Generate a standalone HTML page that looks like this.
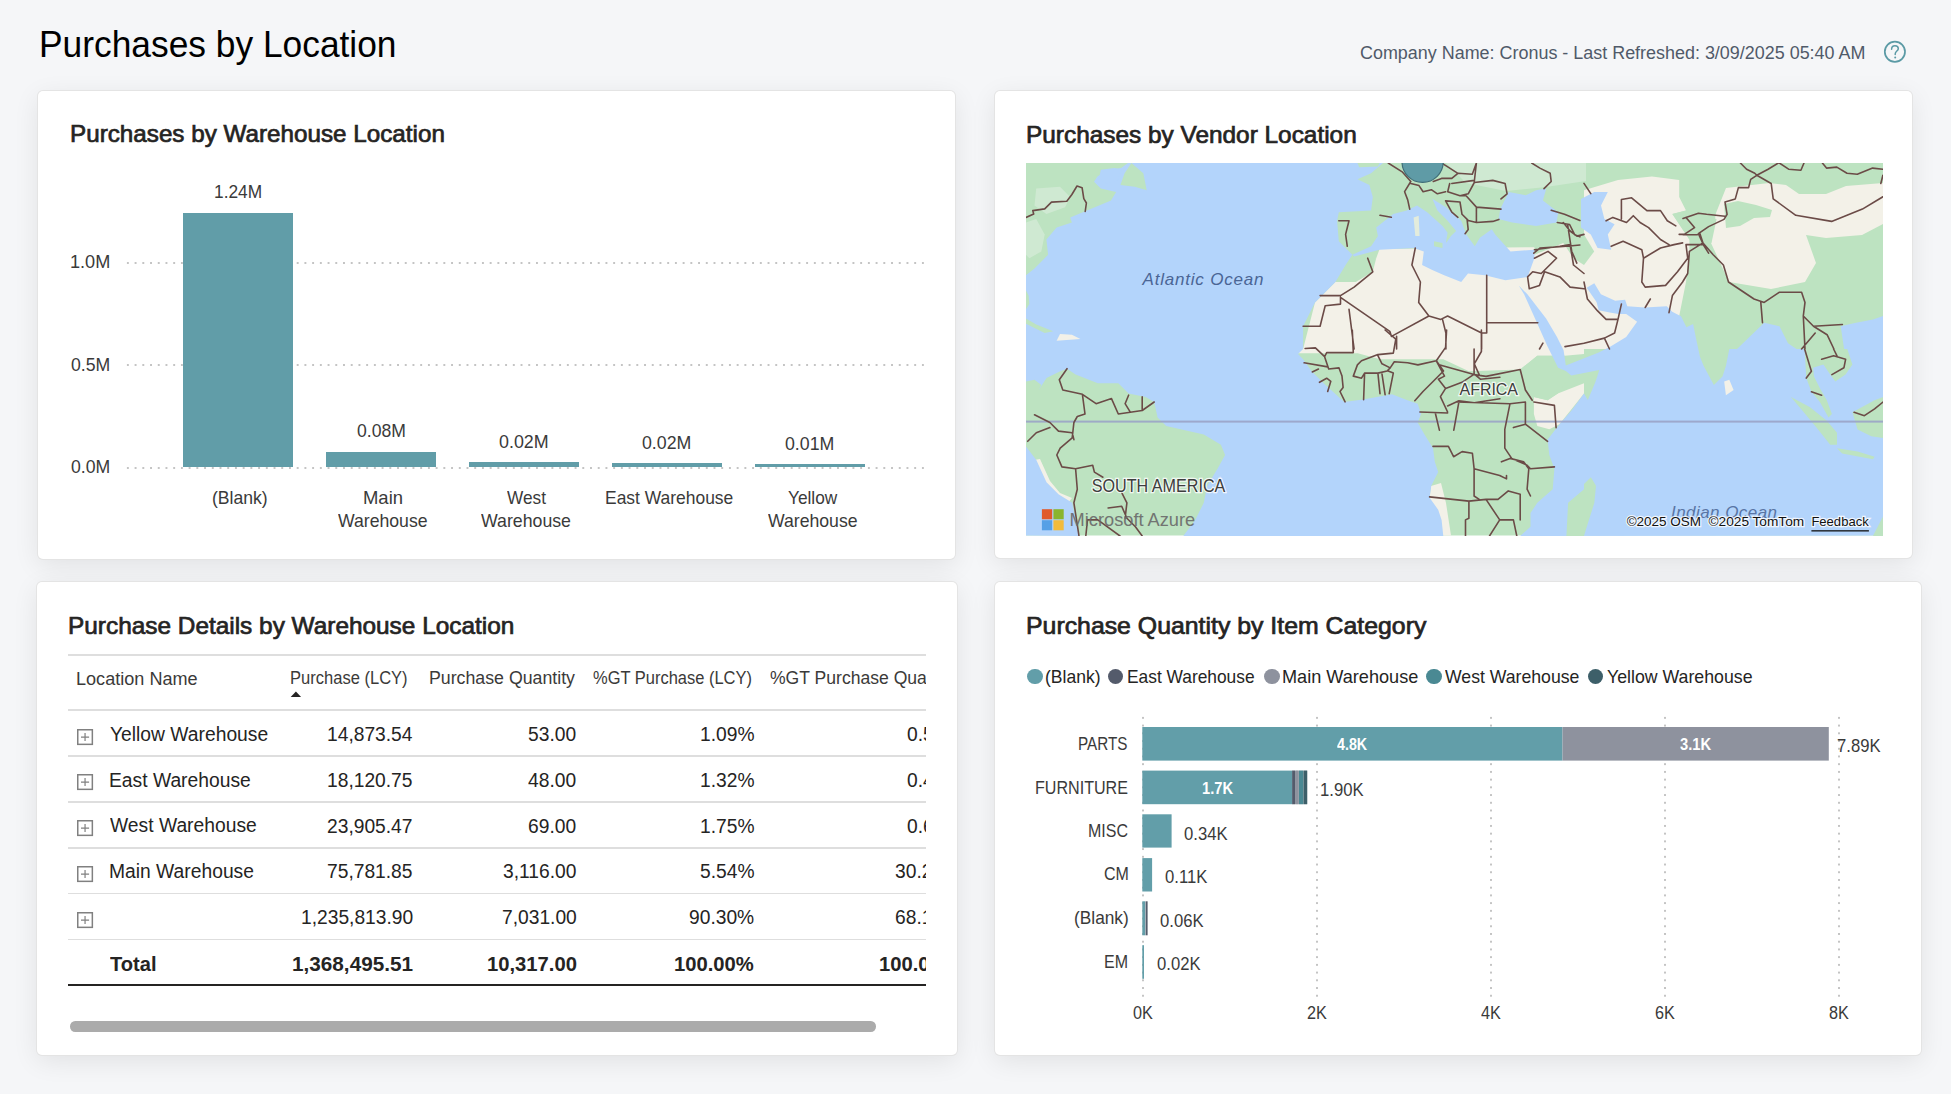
<!DOCTYPE html>
<html><head><meta charset="utf-8"><style>
html,body{margin:0;padding:0;}
body{width:1951px;height:1094px;background:#f5f6f8;position:relative;overflow:hidden;font-family:"Liberation Sans",sans-serif;}
.t{position:absolute;white-space:nowrap;}
.r{position:absolute;}
.clip{position:absolute;overflow:hidden;}
.card{position:absolute;background:#fff;border-radius:5px;box-shadow:0 0 0 1px #e4e4e4, 0 6px 26px rgba(0,0,0,0.085);}
</style></head><body>
<div class="t" style="left:38.99px;top:26.31px;font-size:37.79px;line-height:37.79px;color:#000000;transform:scaleX(0.9353);transform-origin:0 0;">Purchases by Location</div>
<div class="t" style="left:1360.15px;top:44.21px;font-size:18.90px;line-height:18.90px;color:#505a69;transform:scaleX(0.9494);transform-origin:0 0;">Company Name: Cronus - Last Refreshed: 3/09/2025 05:40 AM</div>
<svg class="r" style="left:1880px;top:37px;width:30px;height:30px" viewBox="0 0 30 30"><circle cx="14.9" cy="14.8" r="10.1" fill="none" stroke="#5b9aa5" stroke-width="1.7"/><path d="M11.6 12.2 C11.6 9.9 13.2 8.7 15 8.7 C16.9 8.7 18.3 9.9 18.3 11.7 C18.3 13.9 15.2 14.3 15.2 16.9 L15.2 17.6" fill="none" stroke="#5b9aa5" stroke-width="1.5" stroke-linecap="round"/><circle cx="15.2" cy="20.6" r="1" fill="#5b9aa5"/></svg>
<div class="card" style="left:37.50px;top:90.50px;width:917.00px;height:468.50px"></div>
<div class="card" style="left:995.00px;top:91.00px;width:916.50px;height:467.00px"></div>
<div class="card" style="left:36.50px;top:581.50px;width:920.00px;height:473.50px"></div>
<div class="card" style="left:994.50px;top:581.50px;width:926.00px;height:473.50px"></div>
<div class="t" style="left:69.78px;top:122.12px;font-size:23.84px;line-height:23.84px;color:#252423;-webkit-text-stroke:0.7px #252423;transform:scaleX(1.0169);transform-origin:0 0;">Purchases by Warehouse Location</div>
<div class="t" style="left:70.03px;top:252.65px;font-size:18.60px;line-height:18.60px;color:#3a3a3a;transform:scaleX(0.9744);transform-origin:0 0;">1.0M</div>
<div class="r" style="left:124px;top:261.6px;width:800px;height:2px;background-image:radial-gradient(circle,#c4c4c4 0.8px,transparent 1.05px);background-size:7.72px 2px;"></div>
<div class="t" style="left:71.00px;top:355.55px;font-size:18.60px;line-height:18.60px;color:#3a3a3a;transform:scaleX(0.9500);transform-origin:0 0;">0.5M</div>
<div class="r" style="left:124px;top:364.2px;width:800px;height:2px;background-image:radial-gradient(circle,#c4c4c4 0.8px,transparent 1.05px);background-size:7.72px 2px;"></div>
<div class="t" style="left:71.00px;top:458.45px;font-size:18.60px;line-height:18.60px;color:#3a3a3a;transform:scaleX(0.9500);transform-origin:0 0;">0.0M</div>
<div class="r" style="left:124px;top:466.8px;width:800px;height:2px;background-image:radial-gradient(circle,#c4c4c4 0.8px,transparent 1.05px);background-size:7.72px 2px;"></div>
<div class="r" style="left:182.90px;top:213.40px;width:110.20px;height:253.90px;background:#619da8;"></div>
<div class="r" style="left:325.90px;top:451.50px;width:110.20px;height:15.80px;background:#619da8;"></div>
<div class="r" style="left:468.90px;top:462.00px;width:110.20px;height:5.30px;background:#619da8;"></div>
<div class="r" style="left:612.00px;top:463.10px;width:110.20px;height:4.20px;background:#619da8;"></div>
<div class="r" style="left:755.00px;top:463.80px;width:110.20px;height:3.50px;background:#619da8;"></div>
<div class="t" style="left:213.83px;top:184.47px;font-size:17.88px;line-height:17.88px;color:#3a3a3a;transform:scaleX(0.9708);transform-origin:0 0;">1.24M</div>
<div class="t" style="left:356.60px;top:423.37px;font-size:17.88px;line-height:17.88px;color:#3a3a3a;transform:scaleX(0.9857);transform-origin:0 0;">0.08M</div>
<div class="t" style="left:499.00px;top:434.17px;font-size:17.88px;line-height:17.88px;color:#3a3a3a;">0.02M</div>
<div class="t" style="left:642.30px;top:434.97px;font-size:17.88px;line-height:17.88px;color:#3a3a3a;transform:scaleX(0.9939);transform-origin:0 0;">0.02M</div>
<div class="t" style="left:785.30px;top:436.07px;font-size:17.88px;line-height:17.88px;color:#3a3a3a;transform:scaleX(0.9939);transform-origin:0 0;">0.01M</div>
<div class="t" style="left:212.10px;top:489.35px;font-size:18.60px;line-height:18.60px;color:#3a3a3a;transform:scaleX(0.9456);transform-origin:0 0;">(Blank)</div>
<div class="t" style="left:362.71px;top:488.55px;font-size:18.60px;line-height:18.60px;color:#3a3a3a;transform:scaleX(0.9923);transform-origin:0 0;">Main</div>
<div class="t" style="left:338.45px;top:512.35px;font-size:18.60px;line-height:18.60px;color:#3a3a3a;transform:scaleX(0.9489);transform-origin:0 0;">Warehouse</div>
<div class="t" style="left:506.65px;top:488.55px;font-size:18.60px;line-height:18.60px;color:#3a3a3a;transform:scaleX(0.9262);transform-origin:0 0;">West</div>
<div class="t" style="left:481.30px;top:512.35px;font-size:18.60px;line-height:18.60px;color:#3a3a3a;transform:scaleX(0.9532);transform-origin:0 0;">Warehouse</div>
<div class="t" style="left:604.91px;top:488.55px;font-size:18.60px;line-height:18.60px;color:#3a3a3a;transform:scaleX(0.9378);transform-origin:0 0;">East Warehouse</div>
<div class="t" style="left:787.60px;top:488.55px;font-size:18.60px;line-height:18.60px;color:#3a3a3a;transform:scaleX(0.9283);transform-origin:0 0;">Yellow</div>
<div class="t" style="left:767.60px;top:511.95px;font-size:18.60px;line-height:18.60px;color:#3a3a3a;transform:scaleX(0.9489);transform-origin:0 0;">Warehouse</div>
<div class="t" style="left:1025.88px;top:122.62px;font-size:23.84px;line-height:23.84px;color:#252423;-webkit-text-stroke:0.7px #252423;transform:scaleX(1.0233);transform-origin:0 0;">Purchases by Vendor Location</div>
<svg class="r" style="left:1026px;top:163px;width:857px;height:372.5px" viewBox="0 0 857 372.5" preserveAspectRatio="none"><rect x="0" y="0" width="857" height="372.5" fill="#bde3c1"/><path d="M277.1 186.0 L289.0 139.4 L309.4 119.0 L350.2 95.2 L353.6 85.9 L508.4 84.2 L508.4 91.8 L537.3 79.9 L558.0 81.6 L558.0 186.0 Z" fill="#f3f1e8"/><path d="M272.0 186.0 L558.0 186.0 L558.0 191.1 L538.7 192.8 L511.3 192.8 L494.2 206.5 L442.9 208.2 L417.3 196.3 L354.1 196.3 L331.8 190.3 L272.0 190.3 Z" fill="#f3f1e8"/><path d="M507.9 233.9 L521.6 237.3 L531.8 230.4 L558.0 220.2 L558.0 230.4 L533.5 261.2 L523.3 266.3 L511.3 262.9 L507.9 251.0 Z" fill="#f3f1e8"/><path d="M558.0 27.2 L592.0 17.0 L626.0 13.6 L653.2 17.0 L653.2 34.0 L660.0 47.6 L646.4 51.0 L663.4 76.5 L663.4 88.4 L660.0 119.0 L653.2 153.0 L660.0 186.0 L558.0 186.0 Z" fill="#f3f1e8"/><path d="M700.0 25.0 L743.0 20.0 L760.0 22.0 L773.0 31.0 L800.0 31.0 L820.0 23.0 L857.0 20.0 L857.0 61.0 L836.0 72.0 L800.0 75.0 L780.0 72.0 L790.0 100.0 L779.0 119.0 L745.0 126.0 L703.0 119.0 L685.0 80.0 L690.0 50.0 Z" fill="#f3f1e8"/><path d="M309.4 119.0 L319.6 102.0 L328.1 93.5 L350.2 95.2 L346.8 108.8 L329.8 119.0 Z" fill="#bde3c1"/><path d="M537.3 79.9 L544.1 59.5 L558.0 56.1 L558.0 102.0 L547.5 95.2 Z" fill="#bde3c1"/><path d="M558.0 71.4 L568.2 88.4 L558.0 102.0 Z" fill="#bde3c1"/><path d="M646.4 51.0 L660.0 47.6 L690.6 56.1 L685.5 79.9 L677.0 81.6 L663.4 76.5 Z" fill="#bde3c1"/><path d="M698.0 41.0 L712.0 38.0 L730.0 42.0 L746.0 47.0 L744.0 54.0 L728.0 55.0 L714.0 63.0 L700.0 65.0 Z" fill="#bde3c1"/><path d="M420.0 0.0 L560.0 0.0 L560.0 18.0 L520.0 24.0 L480.0 28.0 L440.0 20.0 Z" fill="#cfe9d2"/><path d="M494.2 206.5 L511.3 192.8 L538.7 192.8 L545.5 211.6 L531.8 230.4 L521.6 237.3 L507.9 233.9 L499.4 220.2 Z" fill="#bde3c1"/><path d="M405.0 323.0 L415.0 320.0 L420.0 340.0 L425.0 372.5 L412.0 372.5 L402.0 345.0 Z" fill="#f3f1e8"/><path d="M8.0 297.0 L14.0 296.0 L24.0 318.0 L34.0 330.0 L46.0 335.0 L42.0 340.0 L28.0 333.0 L14.0 315.0 Z" fill="#f3f1e8"/><path d="M102.0 0.0 L357.0 0.0 L345.1 10.2 L331.5 16.2 L343.4 22.1 L346.8 34.0 L345.1 47.6 L312.8 49.3 L311.1 57.8 L312.8 78.2 L319.6 85.0 L326.4 91.8 L319.6 102.0 L309.4 119.0 L289.0 139.4 L277.1 163.2 L277.1 186.0 L272.0 191.1 L277.1 196.3 L285.7 208.2 L297.6 220.2 L318.2 239.0 L337.0 236.4 L366.0 231.3 L381.4 237.3 L391.7 240.7 L395.1 251.0 L391.7 259.5 L398.5 271.5 L407.0 285.1 L408.8 298.8 L412.2 309.1 L405.3 322.8 L403.6 334.7 L412.2 346.7 L415.6 356.9 L417.3 373.0 L157.3 373.0 L169.2 356.9 L177.8 339.8 L181.2 322.8 L191.5 305.7 L199.1 292.0 L194.9 281.7 L177.8 271.5 L140.2 262.9 L131.6 254.4 L128.2 239.0 L119.7 233.9 L102.6 230.4 L92.3 220.2 L71.8 220.2 L49.6 211.6 L41.0 205.7 L34.2 208.2 L20.5 215.1 L12.8 227.0 L15.4 221.9 L8.5 216.8 L0.0 218.5 L0.0 218.5 L0.0 146.2 L0.0 146.2 L3.4 141.1 L2.6 132.6 L0.0 127.5 L0.0 112.2 L0.0 112.2 L8.5 105.4 L22.1 91.8 L20.4 76.5 L30.6 64.6 L45.9 59.5 L44.2 54.4 L64.6 45.9 L85.0 37.4 L90.1 28.9 L74.8 25.5 L68.0 18.7 L71.4 13.6 L81.6 6.8 L95.2 5.1 L102.0 0.0 Z" fill="#b3d4fb"/><path d="M0.0 283.4 L10.3 297.1 L20.5 319.3 L32.5 331.3 L46.2 339.8 L49.6 356.9 L53.0 373.0 L0.0 372.5 Z" fill="#b3d4fb"/><path d="M494.2 373.0 L504.5 363.8 L504.5 350.1 L511.3 339.8 L526.7 326.2 L528.4 305.7 L523.3 292.0 L521.6 276.6 L533.5 261.2 L545.5 247.5 L558.0 230.4 L561.8 237.0 L569.4 219.0 L573.3 207.0 L545.3 212.4 L539.8 208.1 L532.1 204.8 L521.2 182.8 L512.4 163.1 L498.1 131.3 L492.7 122.5 L501.4 131.3 L520.1 155.4 L531.0 174.0 L537.6 187.2 L539.8 202.6 L572.7 189.4 L583.7 183.9 L600.2 174.0 L611.1 158.7 L600.2 151.0 L592.5 151.0 L583.7 149.4 L572.7 147.2 L570.5 138.9 L560.7 124.7 L568.3 120.3 L574.9 131.3 L589.2 137.8 L599.1 136.7 L601.3 143.3 L618.8 144.4 L640.8 143.3 L646.2 148.8 L655.0 153.2 L660.5 164.2 L667.1 160.9 L670.4 177.3 L674.0 193.8 L670.8 186.0 L677.7 203.1 L687.9 221.9 L696.5 213.4 L699.9 203.1 L703.3 186.0 L711.0 186.0 L738.2 159.8 L753.5 163.2 L762.0 180.2 L770.5 186.0 L778.6 186.0 L780.3 215.1 L785.4 228.7 L793.9 239.0 L802.5 254.4 L805.9 251.0 L800.8 237.3 L793.9 225.3 L788.0 213.4 L787.1 204.8 L797.4 201.4 L804.2 211.6 L809.3 218.5 L819.6 211.6 L826.4 201.4 L821.3 186.0 L818.1 186.0 L814.7 163.2 L830.0 159.8 L847.0 156.4 L857.0 153.0 L857.0 150.0 L857.0 372.5 Z" fill="#b3d4fb"/><path d="M326.4 91.8 L345.1 83.3 L351.9 73.1 L350.2 64.6 L367.2 51.0 L380.8 47.6 L391.0 42.5 L401.2 49.3 L416.5 62.9 L421.6 69.7 L419.9 79.9 L425.0 73.1 L430.1 68.0 L421.6 57.8 L411.4 47.6 L406.3 35.7 L419.9 44.2 L435.2 57.8 L440.3 71.4 L448.8 83.3 L453.9 74.8 L465.8 66.3 L469.2 71.4 L484.5 88.4 L508.4 86.7 L508.4 95.2 L501.6 113.9 L479.4 117.3 L459.0 112.2 L442.0 110.5 L435.2 119.0 L418.2 112.2 L406.3 107.1 L396.1 102.0 L397.8 88.4 L387.6 85.0 L353.6 86.7 L328.1 93.5 Z" fill="#b3d4fb"/><path d="M474.3 45.9 L482.8 28.9 L499.9 32.3 L510.1 27.2 L520.3 25.5 L516.9 37.4 L532.2 49.3 L530.5 59.5 L510.1 62.9 L486.2 59.5 L472.6 56.1 Z" fill="#b3d4fb"/><path d="M555.0 36.0 L568.2 28.9 L581.8 28.9 L575.0 42.5 L578.4 56.1 L588.6 61.2 L581.8 71.4 L585.2 86.7 L571.6 85.0 L564.8 71.4 L555.0 64.6 Z" fill="#b3d4fb"/><path d="M74.8 6.8 L88.4 5.1 L95.2 6.8 L91.8 17.0 L79.9 20.4 L73.1 15.3 Z" fill="#b3d4fb"/><path d="M94.4 22.1 L98.6 10.2 L105.4 0.0 L117.3 10.2 L120.7 27.2 L108.8 23.8 Z" fill="#bde3c1"/><path d="M0.0 155.6 L10.2 161.5 L27.2 168.3 L18.7 170.0 L8.5 164.9 L0.0 160.7 Z" fill="#bde3c1"/><path d="M558.0 321.1 L564.8 314.2 L570.0 322.8 L568.3 339.9 L559.7 367.2 L558.0 373.0 Z" fill="#bde3c1"/><path d="M764.9 233.9 L783.7 244.1 L800.8 257.8 L811.0 269.8 L811.0 281.7 L804.2 281.7 L790.5 264.6 L773.4 244.1 Z" fill="#bde3c1"/><path d="M826.4 249.3 L848.6 237.3 L857.0 233.9 L857.0 274.9 L845.2 273.2 L831.6 266.4 Z" fill="#bde3c1"/><path d="M811.0 285.2 L831.6 288.6 L848.6 293.7 L846.9 296.3 L816.2 290.6 Z" fill="#bde3c1"/><path d="M846.9 373.0 L857.0 353.6 L857.0 373.0 Z" fill="#bde3c1"/><path d="M408.0 78.2 L416.5 79.9 L416.5 85.0 L408.0 83.3 Z" fill="#bde3c1"/><path d="M542.1 339.8 L558.0 326.2 L558.0 373.0 L540.4 373.0 Z" fill="#bde3c1"/><path d="M698.2 218.5 L703.3 216.8 L707.6 227.0 L699.9 232.2 Z" fill="#f3f1e8"/><path d="M387.6 54.4 L392.7 52.7 L393.6 73.1 L389.3 73.1 Z" fill="#e3ecdc"/><path d="M10.2 25.5 L34.0 23.8 L44.2 34.0 L39.1 44.2 L20.4 51.0 L8.5 42.5 Z" fill="#cfe9d2"/><path d="M0.0 59.5 L10.2 56.1 L18.7 71.4 L15.3 88.4 L3.4 95.2 L0.0 91.8 Z" fill="#cfe9d2"/><path d="M34.0 170.9 L45.9 171.7 L54.4 176.0 L30.6 177.7 Z" fill="#f3f1e8"/><path d="M331.5 0.0 L353.6 0.0 L351.9 3.4 L333.2 4.3 Z" fill="#bde3c1"/><rect x="0" y="257.6" width="857" height="2" fill="#9aa3c6" opacity="0.9"/><path d="M0.0 54.4 L7.7 51.0 L6.8 47.6 L18.7 45.9 L25.5 39.1 L40.8 38.3 L45.9 31.5 L51.0 23.0 L56.1 24.7 L57.8 35.7 L60.4 40.0 L59.2 48.5 M41.0 205.7 L33.3 216.8 L36.8 227.0 L56.4 231.3 L59.0 251.0 L51.3 253.5 L47.9 259.5 L46.2 274.9 L34.2 285.1 L30.8 292.0 L35.9 303.9 L49.6 305.7 L66.7 302.2 L68.4 309.1 L76.9 314.2 M8.5 251.8 L23.9 259.5 L32.5 268.1 L46.2 269.8 L47.9 276.6 M1.7 278.3 L10.3 269.8 L23.9 264.6 M56.4 231.3 L70.1 240.7 L85.5 235.6 L92.3 251.0 L104.3 249.2 L116.2 247.5 L128.2 239.0 M102.6 232.2 L99.1 240.7 L104.3 249.2 M116.2 233.9 L116.2 247.5 M49.6 305.7 L51.3 326.2 L47.9 339.8 L53.0 373.0 M82.1 345.0 L95.7 343.3 L100.9 355.2 L109.4 363.8 L116.2 373.0 M95.7 329.6 L100.9 339.8 L99.1 355.2 M59.8 373.0 L61.5 356.9 L71.8 356.9 L94.0 373.0 M312.8 57.8 L323.0 57.8 L319.6 71.4 L321.3 83.3 M537.3 59.5 L544.1 68.0 L550.9 73.1 L558.0 71.4 M508.4 86.7 L533.9 83.3 L544.1 81.6 L547.5 102.0 L558.0 110.5 M508.4 95.2 L522.0 88.4 L530.5 95.2 L515.2 110.5 L506.7 108.8 L501.6 113.9 L503.3 125.8 L513.5 122.4 L518.6 108.8 L533.9 113.9 L544.1 124.1 L558.0 125.8 M314.5 132.6 L294.1 132.6 M314.5 132.6 L328.1 124.1 L346.8 108.8 L341.7 95.2 M314.5 134.3 L314.5 141.1 L299.2 142.8 L294.1 163.2 L277.1 163.2 M314.5 134.3 L363.8 168.3 L365.5 173.4 L402.9 153.0 L414.8 156.4 L421.6 153.0 L455.6 170.0 M323.0 146.2 L328.1 186.0 M389.3 85.0 L385.9 102.0 L394.4 119.0 L392.7 139.4 L402.9 153.0 M416.5 156.4 L419.9 170.0 L419.9 186.0 M370.6 173.4 L370.6 186.0 M460.7 112.2 L460.7 170.0 L455.6 170.0 L455.6 186.0 M460.7 159.8 L511.8 159.8 M516.9 180.2 L513.5 186.0 M539.0 183.6 L558.0 180.2 M412.2 201.4 L448.1 211.6 L460.0 213.4 L494.2 206.5 L499.4 227.0 L506.2 237.3 M431.0 239.0 L484.0 240.7 L478.8 266.3 L478.8 285.1 L485.7 295.4 L501.1 302.2 L504.5 305.7 L528.4 303.9 M448.1 211.6 L448.1 186.0 M484.0 240.7 L499.4 239.0 L499.4 261.2 L521.6 278.3 M499.4 261.2 L487.4 264.6 M507.9 239.0 L528.4 242.4 L530.1 264.6 M407.0 283.4 L422.4 283.4 L427.6 293.7 L436.1 288.6 L446.4 290.3 L448.1 305.7 L473.7 312.5 L480.5 315.9 L480.5 312.5 M448.1 305.7 L448.1 333.0 L453.2 336.4 M475.4 298.8 L484.0 295.4 L497.6 298.8 L502.8 305.7 L501.1 326.2 L504.5 333.0 M403.6 333.9 L442.9 338.1 L460.0 336.4 L472.0 336.4 L482.3 327.9 L494.2 331.3 L494.2 356.9 M442.9 338.1 L442.9 355.2 L439.5 356.9 L439.5 373.0 M460.0 336.4 L473.7 356.9 L487.4 356.9 L490.8 373.0 M473.7 356.9 L463.5 373.0 M558.0 20.4 L564.8 30.6 M595.4 56.1 L595.4 36.5 L605.6 34.8 L620.9 47.6 L634.5 47.6 L641.3 57.8 L649.8 62.9 M580.1 57.8 L586.9 54.4 L600.5 59.5 L607.3 52.7 L614.1 59.5 L622.6 64.6 L634.5 76.5 L643.0 81.6 M585.2 83.3 L597.1 78.2 L615.8 86.7 L617.5 95.2 L615.8 119.0 L619.2 124.1 L639.6 122.4 L651.5 108.8 L661.7 95.2 L660.0 81.6 L677.0 81.6 M617.5 95.2 L634.5 85.0 L648.1 81.6 L656.6 79.9 M660.0 54.4 L668.5 64.6 L658.3 71.4 L653.2 71.4 M673.6 69.7 L677.0 79.9 L687.2 91.8 L697.4 102.0 L702.5 119.0 L728.0 136.0 L738.2 139.4 L753.5 129.2 L775.6 129.2 L779.0 139.4 L777.3 153.0 L787.5 163.2 L816.4 161.5 M677.0 79.9 L663.4 88.4 L661.7 110.5 L656.6 119.0 L646.4 132.6 L643.0 149.6 M734.8 139.4 L736.5 159.8 M777.3 153.0 L779.0 186.0 M787.5 163.2 L801.1 171.7 L807.9 186.0 M775.6 186.0 L789.2 170.0 M558.0 119.0 L561.4 136.0 L571.6 147.9 L580.1 156.4 L592.0 156.4 L595.4 141.1 M592.0 156.4 L588.6 170.0 L578.4 175.1 L558.0 180.2 M578.4 175.1 L583.5 186.0 M624.3 136.0 L619.2 144.5 M778.6 186.0 L785.4 208.2 L780.3 215.1 M795.6 196.3 L807.6 192.8 L819.6 196.3 L817.9 204.8 L805.9 211.6 M807.6 186.0 L811.0 192.8 M785.4 228.7 L795.6 232.2 M828.1 249.3 L838.4 252.7 L848.6 245.8 L857.0 239.0 M279.1 185.5 L289.4 184.9 L298.6 193.7 L302.7 206.0 L313.0 204.9 L316.0 213.1 L317.1 224.4 L314.0 228.5 L319.1 238.8 M298.6 193.7 L300.7 189.6 L327.3 189.6 L326.3 167.0 M327.3 213.1 L331.4 201.9 L335.5 197.8 L351.9 191.6 L367.3 190.1 L369.8 176.2 L366.3 173.2 L359.1 167.0 M351.9 192.6 L356.0 200.8 L364.2 204.9 L368.3 198.8 L381.6 199.8 L391.9 201.9 L410.3 197.8 L419.6 184.4 L420.6 167.0 M327.3 213.1 L335.5 215.2 L338.6 210.1 L351.9 210.1 L361.1 208.0 L364.2 204.9 M338.6 210.1 L337.6 236.7 M351.9 210.1 L354.0 230.6 M356.0 211.1 L359.1 231.6 M362.2 208.0 L367.3 210.1 L363.2 230.6 M410.3 197.8 L417.5 208.0 L407.3 218.3 L397.0 228.5 L388.8 237.7 M410.3 197.8 L418.5 213.1 L412.4 216.2 L419.6 225.4 L414.4 233.6 L421.6 249.0 M419.6 225.4 L436.0 219.3 L448.3 211.1 L454.4 216.2 L473.9 214.2 M421.6 242.9 L432.9 237.7 L448.3 239.8 L473.9 235.7 M393.9 249.0 L421.6 250.0 M409.3 250.0 L413.4 267.1 M432.9 238.8 L427.8 267.1 M455.4 167.0 L455.4 188.5 L448.3 200.8 L453.4 212.1 M278.1 199.8 L301.7 203.9 M286.3 209.0 L292.5 206.0 M293.5 219.3 L300.7 215.2 L304.8 218.3 L301.7 228.5 M362.2 0.0 L376.6 9.2 L384.8 18.5 L378.6 28.7 L381.7 36.9 L383.7 46.1 M384.8 20.5 L393.0 22.6 L397.1 28.7 L405.3 26.7 L411.4 30.8 L419.6 28.7 M415.5 0.0 L420.6 3.1 L431.9 10.3 L446.3 11.3 L450.4 0.0 M407.3 18.5 L415.5 15.4 L425.8 15.4 L431.9 10.3 M425.8 20.5 L448.3 17.4 M423.7 20.5 L421.7 28.7 L434.0 32.8 L442.2 30.8 L448.3 19.5 L466.8 17.4 L479.1 20.5 L481.1 30.8 L475.0 35.9 M434.0 32.8 L440.1 32.8 L450.4 44.1 L475.0 46.1 M450.4 44.1 L450.4 59.5 M419.6 37.9 L434.0 39.0 L436.0 51.3 L442.2 57.4 L450.4 59.5 L466.8 58.4 L472.9 56.4 M441.1 56.4 L442.2 66.6 L439.1 70.7 M419.6 37.9 L425.8 49.2 L431.9 54.3 M505.7 0.0 L513.9 5.1 L524.2 10.3 L525.2 18.5 L518.0 25.6 M450.4 0.0 L448.3 18.5 M525.2 47.2 L538.5 51.3 L553.9 57.4 M507.8 90.2 L513.9 85.1 L543.6 83.0 L553.9 82.0 M531.3 59.5 L543.6 61.5 L548.8 71.8 L553.9 73.8 M541.6 61.5 L545.7 88.2 L550.8 100.1 M354.0 52.3 L365.3 54.3 M714.4 0.0 L720.6 6.2 L728.8 10.3 L730.8 12.3 L745.2 20.5 L747.2 35.9 L769.8 52.3 L805.6 58.4 L836.4 46.1 L856.9 33.8 M730.8 12.3 L724.7 16.4 L722.6 24.6 L712.4 24.6 L709.3 35.9 L699.0 39.0 L701.1 51.3 L698.0 56.4 L682.6 63.6 L672.4 70.7 L677.5 82.0 L682.6 90.2 M752.3 0.0 L742.1 6.2 L730.8 12.3 M753.4 0.0 L762.6 6.2 L774.9 7.2 L778.0 0.0 M796.4 0.0 L800.5 5.1 L810.8 4.1 L821.0 10.3 L831.3 11.3 L846.6 5.1 L856.9 6.2 M657.0 55.4 L672.4 50.2 L680.6 51.3 L699.0 53.3 M657.0 71.8 L671.4 71.8 M856.9 12.3 L854.8 20.5" fill="none" stroke="#6b4b47" stroke-width="1.6" stroke-linejoin="round" stroke-linecap="round"/><circle cx="396.6" cy="-1.2" r="20.6" fill="#5f9ba6" stroke="#3f6d77" stroke-width="1.2"/><text x="116.5" y="121.6" font-family="Liberation Sans" font-size="17" fill="#4a6595" font-style="italic" textLength="121" lengthAdjust="spacing">Atlantic Ocean</text><text x="645" y="355.3" font-family="Liberation Sans" font-size="17" fill="#4a6595" font-style="italic" opacity="0.85" textLength="106" lengthAdjust="spacing">Indian Ocean</text><text x="65.8" y="328.7" font-family="Liberation Sans" font-size="17.6" fill="#3d3d3d" stroke="#ffffff" stroke-width="2.5" stroke-opacity="0.8" paint-order="stroke" textLength="133.5" lengthAdjust="spacingAndGlyphs">SOUTH AMERICA</text><text x="433.5" y="232.2" font-family="Liberation Sans" font-size="17.2" fill="#3d3d3d" stroke="#ffffff" stroke-width="2.5" stroke-opacity="0.8" paint-order="stroke" textLength="58.5" lengthAdjust="spacingAndGlyphs">AFRICA</text><rect x="15.9" y="346.2" width="10.3" height="10.1" fill="#e05a2b"/><rect x="27.4" y="346.2" width="10.3" height="10.1" fill="#8ab52e"/><rect x="15.9" y="357.2" width="10.3" height="10.1" fill="#56a0e6"/><rect x="27.4" y="357.2" width="10.3" height="10.1" fill="#f2bb3b"/><text x="43.6" y="362.9" font-family="Liberation Sans" font-size="18.2" fill="#6a6a6a" opacity="0.9" textLength="125.6" lengthAdjust="spacingAndGlyphs">Microsoft Azure</text><text x="600.7" y="363" font-family="Liberation Sans" font-size="13.4" fill="#111111" stroke="#ffffff" stroke-width="2.5" stroke-opacity="0.8" paint-order="stroke" textLength="74.4" lengthAdjust="spacingAndGlyphs">©2025 OSM</text><text x="682.5" y="363" font-family="Liberation Sans" font-size="13.4" fill="#111111" stroke="#ffffff" stroke-width="2.5" stroke-opacity="0.8" paint-order="stroke" textLength="95.7" lengthAdjust="spacingAndGlyphs">©2025 TomTom</text><text x="785.4" y="363" font-family="Liberation Sans" font-size="13.4" fill="#111111" stroke="#ffffff" stroke-width="2.5" stroke-opacity="0.8" paint-order="stroke" textLength="57.3" lengthAdjust="spacingAndGlyphs">Feedback</text><rect x="785.4" y="367.2" width="57.5" height="1.3" fill="#111"/></svg>
<div class="t" style="left:67.98px;top:613.62px;font-size:23.84px;line-height:23.84px;color:#252423;-webkit-text-stroke:0.7px #252423;transform:scaleX(1.0232);transform-origin:0 0;">Purchase Details by Warehouse Location</div>
<div class="r" style="left:68.00px;top:654.20px;width:857.50px;height:1.60px;background:#dedede;"></div>
<div class="r" style="left:68.00px;top:709.30px;width:857.50px;height:1.60px;background:#dedede;"></div>
<div class="t" style="left:75.64px;top:669.61px;font-size:18.90px;line-height:18.90px;color:#3b3a39;transform:scaleX(0.9571);transform-origin:0 0;">Location Name</div>
<div class="t" style="left:289.82px;top:668.91px;font-size:18.90px;line-height:18.90px;color:#3b3a39;transform:scaleX(0.8752);transform-origin:0 0;">Purchase (LCY)</div>
<div class="t" style="left:428.66px;top:668.91px;font-size:18.90px;line-height:18.90px;color:#3b3a39;transform:scaleX(0.9394);transform-origin:0 0;">Purchase Quantity</div>
<div class="t" style="left:592.90px;top:668.91px;font-size:18.90px;line-height:18.90px;color:#3b3a39;transform:scaleX(0.8720);transform-origin:0 0;">%GT Purchase (LCY)</div>
<div class="clip" style="left:760px;top:660px;width:165.5px;height:40px;">
<div class="t" style="left:10.00px;top:8.91px;font-size:18.90px;line-height:18.90px;color:#3b3a39;transform:scaleX(0.9300);transform-origin:0 0;">%GT Purchase Quantity</div>
</div>
<svg class="r" style="left:289px;top:690px;width:14px;height:8px" viewBox="0 0 14 8"><path d="M1.7 6.9 L6.9 1.6 L12.1 6.9 Z" fill="#252423"/></svg>
<div class="r" style="left:68.00px;top:755.30px;width:857.50px;height:1.60px;background:#dedede;"></div>
<svg class="r" style="left:76px;top:727.5px;width:18px;height:18px" viewBox="0 0 18 18"><rect x="1.75" y="1.75" width="14.6" height="14.6" fill="none" stroke="#808080" stroke-width="1.5"/><path d="M5 9.05 H13.1 M9.05 5 V13.1" stroke="#808080" stroke-width="1.2"/></svg>
<div class="t" style="left:110.40px;top:724.77px;font-size:19.77px;line-height:19.77px;color:#252423;transform:scaleX(0.9750);transform-origin:0 0;">Yellow Warehouse</div>
<div class="t" style="left:327.24px;top:724.89px;font-size:19.62px;line-height:19.62px;color:#252423;transform:scaleX(0.9800);transform-origin:0 0;">14,873.54</div>
<div class="t" style="left:527.98px;top:724.89px;font-size:19.62px;line-height:19.62px;color:#252423;transform:scaleX(0.9800);transform-origin:0 0;">53.00</div>
<div class="t" style="left:699.60px;top:724.89px;font-size:19.62px;line-height:19.62px;color:#252423;transform:scaleX(0.9800);transform-origin:0 0;">1.09%</div>
<div class="clip" style="left:860px;top:716.0px;width:65.5px;height:35px;">
<div class="t" style="left:46.60px;top:8.89px;font-size:19.62px;line-height:19.62px;color:#252423;transform:scaleX(0.9800);transform-origin:0 0;">0.58%</div>
</div>
<div class="r" style="left:68.00px;top:801.15px;width:857.50px;height:1.60px;background:#dedede;"></div>
<svg class="r" style="left:76px;top:773.4px;width:18px;height:18px" viewBox="0 0 18 18"><rect x="1.75" y="1.75" width="14.6" height="14.6" fill="none" stroke="#808080" stroke-width="1.5"/><path d="M5 9.05 H13.1 M9.05 5 V13.1" stroke="#808080" stroke-width="1.2"/></svg>
<div class="t" style="left:109.43px;top:770.62px;font-size:19.77px;line-height:19.77px;color:#252423;transform:scaleX(0.9750);transform-origin:0 0;">East Warehouse</div>
<div class="t" style="left:327.24px;top:770.74px;font-size:19.62px;line-height:19.62px;color:#252423;transform:scaleX(0.9800);transform-origin:0 0;">18,120.75</div>
<div class="t" style="left:527.98px;top:770.74px;font-size:19.62px;line-height:19.62px;color:#252423;transform:scaleX(0.9800);transform-origin:0 0;">48.00</div>
<div class="t" style="left:699.60px;top:770.74px;font-size:19.62px;line-height:19.62px;color:#252423;transform:scaleX(0.9800);transform-origin:0 0;">1.32%</div>
<div class="clip" style="left:860px;top:761.9px;width:65.5px;height:35px;">
<div class="t" style="left:46.60px;top:8.89px;font-size:19.62px;line-height:19.62px;color:#252423;transform:scaleX(0.9800);transform-origin:0 0;">0.47%</div>
</div>
<div class="r" style="left:68.00px;top:847.00px;width:857.50px;height:1.60px;background:#dedede;"></div>
<svg class="r" style="left:76px;top:819.2px;width:18px;height:18px" viewBox="0 0 18 18"><rect x="1.75" y="1.75" width="14.6" height="14.6" fill="none" stroke="#808080" stroke-width="1.5"/><path d="M5 9.05 H13.1 M9.05 5 V13.1" stroke="#808080" stroke-width="1.2"/></svg>
<div class="t" style="left:110.40px;top:816.47px;font-size:19.77px;line-height:19.77px;color:#252423;transform:scaleX(0.9750);transform-origin:0 0;">West Warehouse</div>
<div class="t" style="left:327.24px;top:816.59px;font-size:19.62px;line-height:19.62px;color:#252423;transform:scaleX(0.9800);transform-origin:0 0;">23,905.47</div>
<div class="t" style="left:527.98px;top:816.59px;font-size:19.62px;line-height:19.62px;color:#252423;transform:scaleX(0.9800);transform-origin:0 0;">69.00</div>
<div class="t" style="left:699.60px;top:816.59px;font-size:19.62px;line-height:19.62px;color:#252423;transform:scaleX(0.9800);transform-origin:0 0;">1.75%</div>
<div class="clip" style="left:860px;top:807.7px;width:65.5px;height:35px;">
<div class="t" style="left:46.60px;top:8.89px;font-size:19.62px;line-height:19.62px;color:#252423;transform:scaleX(0.9800);transform-origin:0 0;">0.67%</div>
</div>
<div class="r" style="left:68.00px;top:892.85px;width:857.50px;height:1.60px;background:#dedede;"></div>
<svg class="r" style="left:76px;top:865.0px;width:18px;height:18px" viewBox="0 0 18 18"><rect x="1.75" y="1.75" width="14.6" height="14.6" fill="none" stroke="#808080" stroke-width="1.5"/><path d="M5 9.05 H13.1 M9.05 5 V13.1" stroke="#808080" stroke-width="1.2"/></svg>
<div class="t" style="left:109.43px;top:862.32px;font-size:19.77px;line-height:19.77px;color:#252423;transform:scaleX(0.9750);transform-origin:0 0;">Main Warehouse</div>
<div class="t" style="left:327.24px;top:862.44px;font-size:19.62px;line-height:19.62px;color:#252423;transform:scaleX(0.9800);transform-origin:0 0;">75,781.85</div>
<div class="t" style="left:502.50px;top:862.44px;font-size:19.62px;line-height:19.62px;color:#252423;transform:scaleX(0.9800);transform-origin:0 0;">3,116.00</div>
<div class="t" style="left:699.60px;top:862.44px;font-size:19.62px;line-height:19.62px;color:#252423;transform:scaleX(0.9800);transform-origin:0 0;">5.54%</div>
<div class="clip" style="left:860px;top:853.5px;width:65.5px;height:35px;">
<div class="t" style="left:34.82px;top:8.89px;font-size:19.62px;line-height:19.62px;color:#252423;transform:scaleX(0.9800);transform-origin:0 0;">30.20%</div>
</div>
<div class="r" style="left:68.00px;top:938.70px;width:857.50px;height:1.60px;background:#dedede;"></div>
<svg class="r" style="left:76px;top:910.9px;width:18px;height:18px" viewBox="0 0 18 18"><rect x="1.75" y="1.75" width="14.6" height="14.6" fill="none" stroke="#808080" stroke-width="1.5"/><path d="M5 9.05 H13.1 M9.05 5 V13.1" stroke="#808080" stroke-width="1.2"/></svg>
<div class="t" style="left:300.78px;top:908.29px;font-size:19.62px;line-height:19.62px;color:#252423;transform:scaleX(0.9800);transform-origin:0 0;">1,235,813.90</div>
<div class="t" style="left:501.52px;top:908.29px;font-size:19.62px;line-height:19.62px;color:#252423;transform:scaleX(0.9800);transform-origin:0 0;">7,031.00</div>
<div class="t" style="left:688.82px;top:908.29px;font-size:19.62px;line-height:19.62px;color:#252423;transform:scaleX(0.9800);transform-origin:0 0;">90.30%</div>
<div class="clip" style="left:860px;top:899.4px;width:65.5px;height:35px;">
<div class="t" style="left:34.82px;top:8.89px;font-size:19.62px;line-height:19.62px;color:#252423;transform:scaleX(0.9800);transform-origin:0 0;">68.15%</div>
</div>
<div class="r" style="left:68.00px;top:984.00px;width:857.50px;height:2.00px;background:#252423;"></div>
<div class="t" style="left:110.20px;top:953.83px;font-size:20.64px;line-height:20.64px;color:#252423;font-weight:700;transform:scaleX(0.9745);transform-origin:0 0;">Total</div>
<div class="t" style="left:291.89px;top:953.83px;font-size:20.64px;line-height:20.64px;color:#252423;font-weight:700;transform:scaleX(1.0050);transform-origin:0 0;">1,368,495.51</div>
<div class="t" style="left:486.82px;top:953.83px;font-size:20.64px;line-height:20.64px;color:#252423;font-weight:700;transform:scaleX(0.9800);transform-origin:0 0;">10,317.00</div>
<div class="t" style="left:674.12px;top:953.83px;font-size:20.64px;line-height:20.64px;color:#252423;font-weight:700;transform:scaleX(0.9800);transform-origin:0 0;">100.00%</div>
<div class="clip" style="left:860px;top:945px;width:65.5px;height:35px;">
<div class="t" style="left:19.02px;top:8.83px;font-size:20.64px;line-height:20.64px;color:#252423;font-weight:700;transform:scaleX(0.9800);transform-origin:0 0;">100.00%</div>
</div>
<div class="r" style="left:69.60px;top:1021.40px;width:806.80px;height:10.30px;background:#ababab;border-radius:5.2px;"></div>
<div class="t" style="left:1025.66px;top:613.62px;font-size:23.84px;line-height:23.84px;color:#252423;-webkit-text-stroke:0.7px #252423;transform:scaleX(1.0424);transform-origin:0 0;">Purchase Quantity by Item Category</div>
<div class="r" style="left:1027.3px;top:668.8px;width:15.4px;height:15.4px;border-radius:50%;background:#629ea9"></div>
<div class="t" style="left:1045.06px;top:667.75px;font-size:18.60px;line-height:18.60px;color:#252423;transform:scaleX(0.9421);transform-origin:0 0;">(Blank)</div>
<div class="r" style="left:1108.1px;top:668.8px;width:15.4px;height:15.4px;border-radius:50%;background:#545b6b"></div>
<div class="t" style="left:1127.07px;top:667.75px;font-size:18.60px;line-height:18.60px;color:#252423;transform:scaleX(0.9326);transform-origin:0 0;">East Warehouse</div>
<div class="r" style="left:1264.3px;top:668.8px;width:15.4px;height:15.4px;border-radius:50%;background:#8e929e"></div>
<div class="t" style="left:1281.53px;top:667.75px;font-size:18.60px;line-height:18.60px;color:#252423;transform:scaleX(0.9746);transform-origin:0 0;">Main Warehouse</div>
<div class="r" style="left:1426.2px;top:668.8px;width:15.4px;height:15.4px;border-radius:50%;background:#4a8993"></div>
<div class="t" style="left:1445.30px;top:667.75px;font-size:18.60px;line-height:18.60px;color:#252423;transform:scaleX(0.9489);transform-origin:0 0;">West Warehouse</div>
<div class="r" style="left:1588.1px;top:668.8px;width:15.4px;height:15.4px;border-radius:50%;background:#3d5f69"></div>
<div class="t" style="left:1607.30px;top:667.75px;font-size:18.60px;line-height:18.60px;color:#252423;transform:scaleX(0.9533);transform-origin:0 0;">Yellow Warehouse</div>
<div class="r" style="left:1141.6px;top:714px;width:2px;height:284px;background-image:radial-gradient(circle,#c4c4c4 0.8px,transparent 1.05px);background-size:2px 7.72px;"></div>
<div class="t" style="left:1132.83px;top:1005.04px;font-size:17.44px;line-height:17.44px;color:#3a3a3a;transform:scaleX(0.9300);transform-origin:0 0;">0K</div>
<div class="r" style="left:1315.8px;top:714px;width:2px;height:284px;background-image:radial-gradient(circle,#c4c4c4 0.8px,transparent 1.05px);background-size:2px 7.72px;"></div>
<div class="t" style="left:1306.57px;top:1005.04px;font-size:17.44px;line-height:17.44px;color:#3a3a3a;transform:scaleX(0.9300);transform-origin:0 0;">2K</div>
<div class="r" style="left:1489.9px;top:714px;width:2px;height:284px;background-image:radial-gradient(circle,#c4c4c4 0.8px,transparent 1.05px);background-size:2px 7.72px;"></div>
<div class="t" style="left:1481.13px;top:1005.04px;font-size:17.44px;line-height:17.44px;color:#3a3a3a;transform:scaleX(0.9300);transform-origin:0 0;">4K</div>
<div class="r" style="left:1663.9px;top:714px;width:2px;height:284px;background-image:radial-gradient(circle,#c4c4c4 0.8px,transparent 1.05px);background-size:2px 7.72px;"></div>
<div class="t" style="left:1654.67px;top:1005.04px;font-size:17.44px;line-height:17.44px;color:#3a3a3a;transform:scaleX(0.9300);transform-origin:0 0;">6K</div>
<div class="r" style="left:1837.9px;top:714px;width:2px;height:284px;background-image:radial-gradient(circle,#c4c4c4 0.8px,transparent 1.05px);background-size:2px 7.72px;"></div>
<div class="t" style="left:1829.13px;top:1005.04px;font-size:17.44px;line-height:17.44px;color:#3a3a3a;transform:scaleX(0.9300);transform-origin:0 0;">8K</div>
<div class="t" style="left:1078.48px;top:734.75px;font-size:18.60px;line-height:18.60px;color:#3a3a3a;transform:scaleX(0.8203);transform-origin:0 0;">PARTS</div>
<div class="t" style="left:1035.13px;top:778.85px;font-size:18.60px;line-height:18.60px;color:#3a3a3a;transform:scaleX(0.8651);transform-origin:0 0;">FURNITURE</div>
<div class="t" style="left:1088.14px;top:821.65px;font-size:18.60px;line-height:18.60px;color:#3a3a3a;transform:scaleX(0.8600);transform-origin:0 0;">MISC</div>
<div class="t" style="left:1103.62px;top:865.45px;font-size:18.60px;line-height:18.60px;color:#3a3a3a;transform:scaleX(0.8600);transform-origin:0 0;">CM</div>
<div class="t" style="left:1073.77px;top:909.35px;font-size:18.60px;line-height:18.60px;color:#3a3a3a;transform:scaleX(0.9298);transform-origin:0 0;">(Blank)</div>
<div class="t" style="left:1104.48px;top:952.55px;font-size:18.60px;line-height:18.60px;color:#3a3a3a;transform:scaleX(0.8600);transform-origin:0 0;">EM</div>
<svg class="r" style="left:1000px;top:700px;width:900px;height:300px" viewBox="0 0 900 300"><rect x="142.30" y="27.00" width="420.20" height="33.60" fill="#629ea9"/><rect x="562.50" y="27.00" width="266.30" height="33.60" fill="#8e929e"/><rect x="292.00" y="70.60" width="15.20" height="33.60" fill="#a9b3b9"/><rect x="142.30" y="70.60" width="149.90" height="33.60" fill="#629ea9"/><rect x="292.20" y="70.60" width="3.10" height="33.60" fill="#545b6b"/><rect x="295.80" y="70.60" width="2.80" height="33.60" fill="#8e929e"/><rect x="299.00" y="70.60" width="4.30" height="33.60" fill="#4a8993"/><rect x="303.70" y="70.60" width="3.50" height="33.60" fill="#3d5f69"/><rect x="142.30" y="114.30" width="29.30" height="33.30" fill="#629ea9"/><rect x="142.30" y="158.10" width="9.80" height="33.40" fill="#629ea9"/><rect x="142.30" y="201.30" width="2.90" height="34.00" fill="#629ea9"/><rect x="145.60" y="201.30" width="2.00" height="34.00" fill="#545b6b"/><rect x="142.30" y="245.20" width="1.70" height="33.60" fill="#629ea9"/></svg>
<div class="t" style="left:1337.40px;top:736.71px;font-size:15.70px;line-height:15.70px;color:#ffffff;font-weight:700;transform:scaleX(0.9091);transform-origin:0 0;">4.8K</div>
<div class="t" style="left:1680.20px;top:736.71px;font-size:15.70px;line-height:15.70px;color:#ffffff;font-weight:700;transform:scaleX(0.9394);transform-origin:0 0;">3.1K</div>
<div class="t" style="left:1201.66px;top:781.31px;font-size:15.70px;line-height:15.70px;color:#ffffff;font-weight:700;transform:scaleX(0.9375);transform-origin:0 0;">1.7K</div>
<div class="t" style="left:1837.08px;top:736.94px;font-size:18.02px;line-height:18.02px;color:#3a3a3a;transform:scaleX(0.9250);transform-origin:0 0;">7.89K</div>
<div class="t" style="left:1320.28px;top:780.74px;font-size:18.02px;line-height:18.02px;color:#3a3a3a;transform:scaleX(0.9250);transform-origin:0 0;">1.90K</div>
<div class="t" style="left:1184.30px;top:824.74px;font-size:18.02px;line-height:18.02px;color:#3a3a3a;transform:scaleX(0.9250);transform-origin:0 0;">0.34K</div>
<div class="t" style="left:1165.00px;top:868.14px;font-size:18.02px;line-height:18.02px;color:#3a3a3a;transform:scaleX(0.9250);transform-origin:0 0;">0.11K</div>
<div class="t" style="left:1160.00px;top:912.04px;font-size:18.02px;line-height:18.02px;color:#3a3a3a;transform:scaleX(0.9250);transform-origin:0 0;">0.06K</div>
<div class="t" style="left:1156.70px;top:955.24px;font-size:18.02px;line-height:18.02px;color:#3a3a3a;transform:scaleX(0.9250);transform-origin:0 0;">0.02K</div>
</body></html>
